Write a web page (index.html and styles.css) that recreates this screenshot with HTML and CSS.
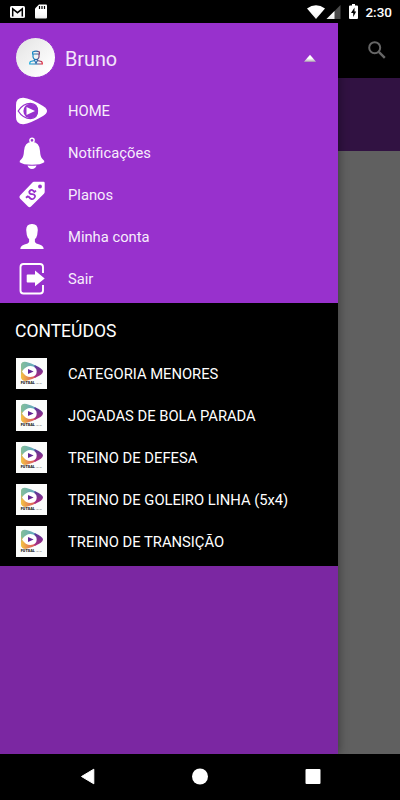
FILE: index.html
```html
<!DOCTYPE html>
<html lang="pt-BR">
<head>
    <meta charset="utf-8">
    <meta name="viewport" content="width=device-width, initial-scale=1">
    <title>Futsal</title>
    <link rel="stylesheet" href="styles.css">
</head>
<body>

<svg class="defs" width="0" height="0">
    <defs>
        <linearGradient id="g_left" x1="0" y1="0" x2="0" y2="1">
            <stop offset="0" stop-color="#7fbd9b"/>
            <stop offset=".5" stop-color="#c4ba68"/>
            <stop offset="1" stop-color="#f5b13b"/>
        </linearGradient>
        <linearGradient id="g_top" x1="0" y1="0" x2="1" y2="0">
            <stop offset="0" stop-color="#85bf98"/>
            <stop offset="1" stop-color="#5ca5c6"/>
        </linearGradient>
        <linearGradient id="g_bottom" x1="0" y1="0" x2="1" y2="0">
            <stop offset="0" stop-color="#f5c542"/>
            <stop offset="1" stop-color="#d64663"/>
        </linearGradient>
        <linearGradient id="g_right" x1="0" y1="0" x2="0" y2="1">
            <stop offset="0" stop-color="#51399b"/>
            <stop offset="1" stop-color="#b32b80"/>
        </linearGradient>
        <linearGradient id="g_user" x1="0" y1="0" x2="1" y2="0">
            <stop offset="0" stop-color="#12a9df"/>
            <stop offset=".55" stop-color="#2867a8"/>
            <stop offset="1" stop-color="#e62034"/>
        </linearGradient>
        <linearGradient id="g_arrow" x1="0" y1="0" x2="0" y2="1">
            <stop offset=".5" stop-color="#fff"/>
            <stop offset="1" stop-color="#b5b5b5"/>
        </linearGradient>
    </defs>
    <symbol id="thumb" viewBox="0 0 31 31">
        <rect width="31" height="31" fill="#fbfcfb"/>
        <path d="M5 8Q5 3.500 10 4V22.500Q5 23 5 18Z" fill="url(#g_left)"/>
        <path d="M5 10V8Q5 3 10.500 4Q15 5 20.500 8L19 12H6Z" fill="url(#g_top)"/>
        <path d="M5 17L6 15H19L20.500 19Q15 22 10.500 22.800Q5 23.500 5 17Z" fill="url(#g_bottom)"/>
        <path d="M18.500 7Q27 10.500 27 13.500Q27 16.500 18.500 20Z" fill="url(#g_right)"/>
        <path d="M6 13.500Q9.500 8 14.500 8Q20.700 8.500 20.700 13.500Q20.700 18.500 14.500 19Q9.500 19 6 13.500Z" fill="#fff"/>
        <path d="M12 10.900L17.600 13.500L12 16.100Z" fill="#622794"/>
    </symbol>
</svg>

<div class="status-bar">
    <div class="status-left">
        <svg width="15" height="12" viewBox="0 0 15 12">
            <rect width="15" height="12" rx="1.500" fill="#fff"/>
            <path d="M2.700 10.500V2.800L7.500 6.700L12.300 2.800V10.500" fill="none" stroke="#000" stroke-width="1.500"/>
        </svg>
        <svg width="12" height="15" viewBox="0 0 12 15">
            <path d="M4 .5H11Q12 .5 12 1.500V13.500Q12 14.500 11 14.500H1Q0 14.500 0 13.500V4.500Z" fill="#fff"/>
            <path d="M4.500 2V5M7 2V5M9.500 2V5" stroke="#000" stroke-width="1.200"/>
        </svg>
    </div>
    <div class="status-right">
        <svg width="18" height="14" viewBox="0 0 18 14"><path d="M0 3.500Q9-3.200 18 3.500L9 14Z" fill="#fff"/></svg>
        <svg width="15" height="14" viewBox="0 0 15 14">
            <path d="M14.500 0V14H.5Z" fill="#4c4c4c"/>
            <path d="M8.500 6V14H.5Z" fill="#fff"/>
        </svg>
        <svg class="battery" width="9" height="15" viewBox="0 0 9 15">
            <path d="M3 0H6V1.500H8Q9 1.500 9 2.500V14Q9 15 8 15H1Q0 15 0 14V2.500Q0 1.500 1 1.500H3Z" fill="#fff"/>
            <path d="M5.500 3.500L2 9H4.200V13L7.200 7.500H5.500Z" fill="#000"/>
        </svg>
        <span class="clock">2:30</span>
    </div>
</div>

<div class="screen">
    <div class="drawer">
        <div class="account">
            <div class="user">
                <span class="avatar">
                    <svg width="14" height="15" viewBox="0 0 14 15" fill="none" stroke="url(#g_user)" stroke-width="1.200">
                        <path d="M3.600 4V2Q7 .2 10.400 2V4ZM4 4V7Q4.500 9.500 7 9.600Q9.500 9.500 10 7V4M5.500 9V10.500L1.500 11.500Q.7 12 .7 14H13.300Q13.300 12 12.500 11.500L8.500 10.500V9M5.500 10.500L7 13L8.500 10.500"/>
                    </svg>
                </span>
                <span class="user-name">Bruno</span>
                <svg class="arrow" width="14" height="9" viewBox="0 0 14 9"><path d="M7 .8L13 7.700H1Z" fill="url(#g_arrow)"/></svg>
            </div>

            <div class="item">
                <span class="icon">
                    <svg width="32" height="28" viewBox="0 0 32 28">
                        <path d="M0 8Q0 .5 7.500 .8Q14 1.300 27 9Q35 14 27 19Q14 26.700 7.500 27.200Q0 27.500 0 20Z" fill="#fff"/>
                        <path d="M2.200 14Q7 6.400 14.500 6.400Q21.500 6.800 21.500 14Q21.500 21.200 14.500 21.600Q7 21.600 2.200 14Z" fill="#fff" stroke="#9831cd" stroke-width="1.300"/>
                        <circle cx="14.700" cy="14" r="7.300" fill="#9831cd"/>
                        <path d="M10.500 10L19 14L10.500 18Z" fill="#fff"/>
                    </svg>
                </span>
                <span class="label">HOME</span>
            </div>
            <div class="item">
                <span class="icon">
                    <svg width="28" height="32" viewBox="0 0 28 32" fill="#fff">
                        <circle cx="14" cy="3.300" r="2.100" fill="none" stroke="#fff" stroke-width="1.500"/>
                        <path d="M14 5Q21.500 5 22 14Q22.300 20 24.500 22Q26.900 24 26.300 25.300Q23 27.800 14 27.800Q5 27.800 1.700 25.300Q1.100 24 3.500 22Q5.700 20 6 14Q6.500 5 14 5Z"/>
                        <path d="M9.500 28.500Q14 29 18.500 28.500Q17.500 31.900 14 31.900Q10.500 31.900 9.500 28.500Z"/>
                    </svg>
                </span>
                <span class="label">Notificações</span>
            </div>
            <div class="item">
                <span class="icon">
                    <svg width="28" height="28" viewBox="0 0 28 28">
                        <path d="M16 .8H25.500Q26.700 .8 26.700 2V11Q26.700 12 25.700 13L13 25.500Q11.500 27 10 25.500L2 17.500Q.7 16 2 14.500L14 2Q15 .8 16 .8Z" fill="#fff"/>
                        <circle cx="22" cy="5.500" r="1.900" fill="#9831cd"/>
                        <path d="M16.500 11Q13.500 7.500 11.500 10C10 12 12 13.500 14 13C17 12.500 18.500 15 16.500 17Q14 19.500 10.500 15.500M17.500 9L15.700 11M10.500 15.500L8.500 17.500" transform="rotate(8 13.500 13)" fill="none" stroke="#9831cd" stroke-width="1.800"/>
                    </svg>
                </span>
                <span class="label">Planos</span>
            </div>
            <div class="item">
                <span class="icon">
                    <svg width="26" height="28" viewBox="0 0 26 28">
                        <path d="M13 1Q18.800 .8 18.800 7L18.200 12Q17.500 15 15.900 16V19Q16.500 20.500 20.500 21.500Q24.500 22.500 24.700 26H1.300Q1.500 22.500 5.500 21.500Q9.500 20.500 10.100 19V16Q8.500 15 7.800 12L7.200 7Q7.200 .8 13 1Z" fill="#fff"/>
                    </svg>
                </span>
                <span class="label">Minha conta</span>
            </div>
            <div class="item">
                <span class="icon">
                    <svg width="28" height="32" viewBox="0 0 28 32">
                        <path d="M25 10V4Q25 1 22 1H5.500Q2.500 1 2.500 4V27.500Q2.500 30.500 5.500 30.500H22Q25 30.500 25 27.500V22" fill="none" stroke="#fff" stroke-width="1.900"/>
                        <path d="M9.500 11.500H17V7.500L26.700 15.400L17 23.300V19.500H9.500Q8.700 19.500 8.700 18.700V12.300Q8.700 11.500 9.500 11.500Z" fill="#fff"/>
                    </svg>
                </span>
                <span class="label">Sair</span>
            </div>
        </div>

        <div class="contents">
            <div class="tit">CONTEÚDOS</div>
            <div class="item">
                <span class="icon">
                    <svg width="31" height="31"><use href="#thumb"/><text x="4.800" y="26" class="thumb-name">FUTSAL</text><text x="19.500" y="26" class="thumb-sub">40:40</text></svg>
                </span>
                <span class="label">CATEGORIA MENORES</span>
            </div>
            <div class="item">
                <span class="icon">
                    <svg width="31" height="31"><use href="#thumb"/><text x="4.800" y="26" class="thumb-name">FUTSAL</text><text x="19.500" y="26" class="thumb-sub">40:40</text></svg>
                </span>
                <span class="label">JOGADAS DE BOLA PARADA</span>
            </div>
            <div class="item">
                <span class="icon">
                    <svg width="31" height="31"><use href="#thumb"/><text x="4.800" y="26" class="thumb-name">FUTSAL</text><text x="19.500" y="26" class="thumb-sub">40:40</text></svg>
                </span>
                <span class="label">TREINO DE DEFESA</span>
            </div>
            <div class="item">
                <span class="icon">
                    <svg width="31" height="31"><use href="#thumb"/><text x="4.800" y="26" class="thumb-name">FUTSAL</text><text x="19.500" y="26" class="thumb-sub">40:40</text></svg>
                </span>
                <span class="label">TREINO DE GOLEIRO LINHA (5x4)</span>
            </div>
            <div class="item">
                <span class="icon">
                    <svg width="31" height="31"><use href="#thumb"/><text x="4.800" y="26" class="thumb-name">FUTSAL</text><text x="19.500" y="26" class="thumb-sub">40:40</text></svg>
                </span>
                <span class="label">TREINO DE TRANSIÇÃO</span>
            </div>
        </div>
    </div>

    <div class="page">
        <div class="toolbar">
            <svg width="18" height="18" viewBox="0 0 18 18" fill="none" stroke="#666">
                <circle cx="6.700" cy="6.700" r="5.500" stroke-width="2"/>
                <path d="M10.800 10.800L16.800 16.800" stroke-width="2.400"/>
            </svg>
        </div>
        <div class="tabs"></div>
    </div>
</div>

<div class="nav-bar">
    <svg width="16" height="17" viewBox="0 0 16 17"><path d="M13.800 1.200V15.800L1.500 8.500Z" fill="#fff" stroke="#fff" stroke-linejoin="round"/></svg>
    <svg width="16" height="17" viewBox="0 0 16 17"><circle cx="8" cy="8.500" r="8" fill="#fff"/></svg>
    <svg width="16" height="17" viewBox="0 0 16 17"><rect x=".5" y="1" width="15" height="15" rx="1" fill="#fff"/></svg>
</div>

</body>
</html>
```

FILE: styles.css
```css
*{ box-sizing: border-box;}
body{ margin: 0;width: 400px;height: 800px;overflow: hidden;display: flex;flex-direction: column;background: #000;color: #FFF;font-family: Roboto, "Liberation Sans", sans-serif;}
svg{ display: block;flex: none;}
.defs{ position: absolute;}

.status-bar{ height: 23px;flex: none;display: flex;justify-content: space-between;padding: 0 8px 0 10px;}
.status-left,.status-right{ display: flex;align-items: center;}
.status-left{ gap: 10px;}
.status-right{ gap: 1px;}
.status-right .battery{ margin-left: 7px;}
.clock{ margin-left: 6px;font-size: 13.5px;font-weight: 500;line-height: 23px;padding-top: 1px;}

.screen{ flex: 1;display: flex;min-height: 0;}
.drawer{
    width: 338px;
    flex: none;
    background: #7b27a2;
    box-shadow: 0 0 10px rgba(0,0,0,.45);
    z-index: 1;
}
.account{ height: 280px;background: #9831cd;}
.user{ height: 67px;display: flex;align-items: center;padding: 4px 21px 0 15px;}
.avatar{
    width: 41px;
    height: 41px;
    border: solid 1px #9831cd;
    margin-top: -2px;
    border-radius: 50%;
    background: linear-gradient(135deg, #e2e2e2, #FFF 85%);
    display: flex;
    align-items: center;
    justify-content: center;
}
.user-name{ flex: 1;padding: 2px 0 0 9px;font-size: 19.8px;color: #f3e6fa;}
.item{ height: 42px;display: flex;align-items: center;}
.icon{ width: 32px;margin-left: 16px;display: flex;justify-content: center;}
.label{ margin-left: 20px;font-size: 14.75px;line-height: 20px;white-space: nowrap;}
.account .label{ color: #f7edfc;}

.contents{ height: 263px;background: #000;}
.contents .tit{ height: 49px;padding: 17px 0 0 15px;font-size: 17.5px;line-height: 22px;}
.contents .icon{ justify-content: flex-start;}
.contents .label{ padding-top: 1px;}
.thumb-name{ font-size: 3.8px;font-weight: 900;fill: #111;}
.thumb-sub{ font-size: 2.5px;fill: #777;}

.page{ flex: 1;background: #606060;}
.toolbar{ height: 55px;padding: 18px 14px 0 0;background: #000;display: flex;justify-content: flex-end;}
.tabs{ height: 73px;background: #311242;}

.nav-bar{ height: 46px;flex: none;display: flex;justify-content: center;align-items: center;gap: 96.5px;padding-bottom: 1px;}
```
